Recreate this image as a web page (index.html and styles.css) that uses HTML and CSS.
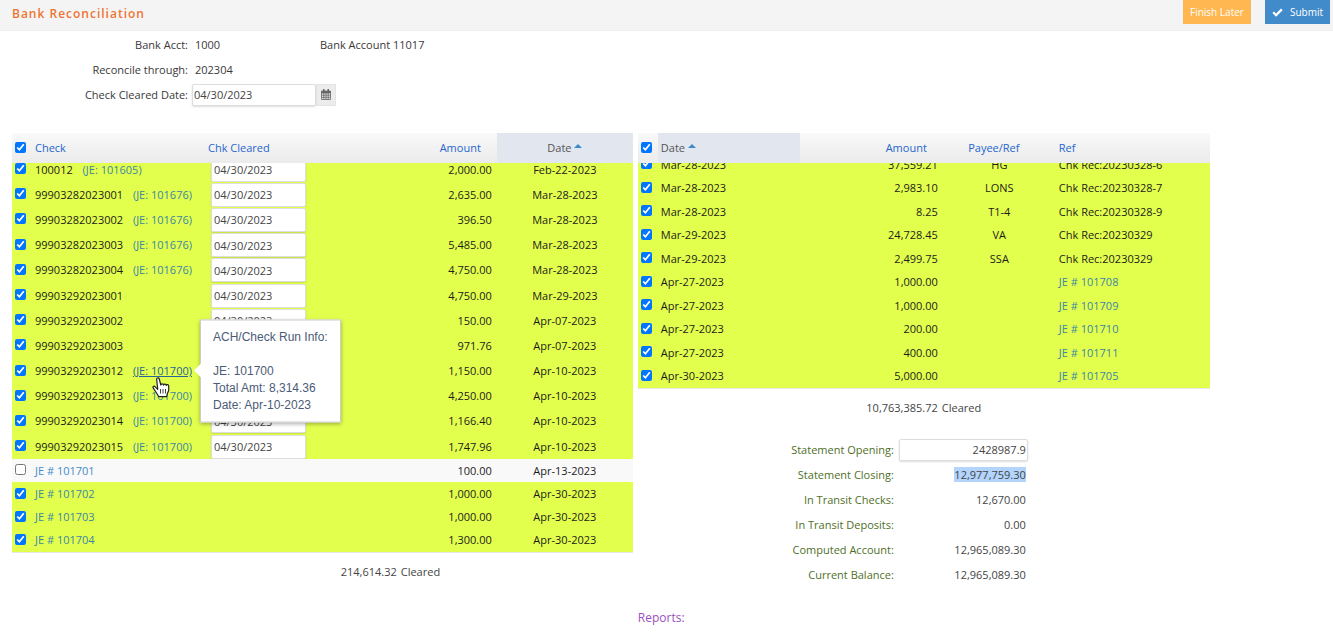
FILE: index.html
```html
<!DOCTYPE html>
<html lang="en">
<head>
<meta charset="utf-8">
<title>Bank Reconciliation</title>
<link rel="stylesheet" href="styles.css">
</head>
<body>
<header class="topbar">
  <h1 class="title">Bank Reconciliation</h1>
  <div class="actions">
    <button class="btn btn-later" type="button">Finish Later</button>
    <button class="btn btn-submit" type="submit"><svg width="11" height="9" viewBox="0 0 11 9" aria-hidden="true"><path d="M1.2 4.3 4.1 7.2 9.8 1.4" fill="none" stroke="#fff" stroke-width="2.3"/></svg>Submit</button>
  </div>
</header>
<form class="filters">
  <span class="label">Bank Acct:</span><span class="value">1000</span><span class="account">Bank Account 11017</span>
  <span class="label">Reconcile through:</span><span class="value wide">202304</span>
  <label class="label" for="cleared-date">Check Cleared Date:</label>
  <div class="date-group wide"><input class="field date-main" id="cleared-date" type="text" value="04/30/2023"><button class="addon" type="button" aria-label="Open calendar"><svg width="10" height="11" viewBox="0 0 10 11" aria-hidden="true"><path d="M.5 2h9v8.500h-9z M.5 4h9 M.5 6.200h9 M.5 8.300h9 M2.800 4v6.500 M5 4v6.500 M7.200 4v6.500" fill="none" stroke="#666" stroke-width=".8"/><path d="M.5 2h9v2h-9z M2 0h1.500v3H2z M6.500 0H8v3H6.500z" fill="#666"/></svg></button></div>
</form>
<main class="panels">
  <section class="panel checks">
    <table class="grid head">
      <colgroup><col class="c-box"><col class="c-check"><col><col class="c-amt"><col class="c-date"></colgroup>
      <thead><tr><th><input type="checkbox" aria-label="Select all checks" checked></th><th>Check</th><th>Chk Cleared</th><th class="num">Amount</th><th class="mid sorted">Date <i class="caret"></i></th></tr></thead>
    </table>
    <div class="scroll checks-scroll">
    <table class="grid body checks-body">
      <colgroup><col class="c-box"><col class="c-check"><col><col class="c-amt"><col class="c-date"></colgroup>
      <tbody>
      <tr class="tall"><td><input type="checkbox" aria-label="100012" checked></td><td>100012 <a class="je" href="#">(JE: 101605)</a></td><td><input class="field cleared" aria-label="Cleared date" value="04/30/2023"></td><td class="num">2,000.00</td><td class="mid">Feb-22-2023</td></tr>
      <tr class="tall"><td><input type="checkbox" aria-label="99903282023001" checked></td><td>99903282023001 <a class="je" href="#">(JE: 101676)</a></td><td><input class="field cleared" aria-label="Cleared date" value="04/30/2023"></td><td class="num">2,635.00</td><td class="mid">Mar-28-2023</td></tr>
      <tr class="tall"><td><input type="checkbox" aria-label="99903282023002" checked></td><td>99903282023002 <a class="je" href="#">(JE: 101676)</a></td><td><input class="field cleared" aria-label="Cleared date" value="04/30/2023"></td><td class="num">396.50</td><td class="mid">Mar-28-2023</td></tr>
      <tr class="tall"><td><input type="checkbox" aria-label="99903282023003" checked></td><td>99903282023003 <a class="je" href="#">(JE: 101676)</a></td><td><input class="field cleared" aria-label="Cleared date" value="04/30/2023"></td><td class="num">5,485.00</td><td class="mid">Mar-28-2023</td></tr>
      <tr class="tall"><td><input type="checkbox" aria-label="99903282023004" checked></td><td>99903282023004 <a class="je" href="#">(JE: 101676)</a></td><td><input class="field cleared" aria-label="Cleared date" value="04/30/2023"></td><td class="num">4,750.00</td><td class="mid">Mar-28-2023</td></tr>
      <tr class="tall"><td><input type="checkbox" aria-label="99903292023001" checked></td><td>99903292023001</td><td><input class="field cleared" aria-label="Cleared date" value="04/30/2023"></td><td class="num">4,750.00</td><td class="mid">Mar-29-2023</td></tr>
      <tr class="tall"><td><input type="checkbox" aria-label="99903292023002" checked></td><td>99903292023002</td><td><input class="field cleared" aria-label="Cleared date" value="04/30/2023"></td><td class="num">150.00</td><td class="mid">Apr-07-2023</td></tr>
      <tr class="tall"><td><input type="checkbox" aria-label="99903292023003" checked></td><td>99903292023003</td><td><input class="field cleared" aria-label="Cleared date" value="04/30/2023"></td><td class="num">971.76</td><td class="mid">Apr-07-2023</td></tr>
      <tr class="tall"><td><input type="checkbox" aria-label="99903292023012" checked></td><td>99903292023012 <span class="tip-anchor"><a class="je hover" href="#">(JE: 101700)</a><span class="tip" role="tooltip">ACH/Check Run Info:<br><br>JE: 101700<br>Total Amt: 8,314.36<br>Date: Apr-10-2023</span><svg class="pointer" width="18" height="21" viewBox="0 0 18 21" aria-hidden="true"><path d="M5.700 12.300 3.200 9.800C2 8.600.3 9.600 1.300 11.200l4.200 6.300 1.200 2.200h8l.5-2.600 1.500-3.600V9c0-1.500-2-1.800-2.400-.6-.2-1.500-2.300-1.700-2.700-.3-.3-1.500-2.400-1.500-2.800-.1L7.300 2C6.800.3 4.300.8 4.700 2.600z" fill="#fff" stroke="#222" stroke-width="1.200" stroke-linejoin="round"/><path d="M8.500 12v4.500M11 12v4.500M13.500 12v4.500" stroke="#444" fill="none"/></svg></span></td><td><input class="field cleared" aria-label="Cleared date" value="04/30/2023"></td><td class="num">1,150.00</td><td class="mid">Apr-10-2023</td></tr>
      <tr class="tall"><td><input type="checkbox" aria-label="99903292023013" checked></td><td>99903292023013 <a class="je" href="#">(JE: 101700)</a></td><td><input class="field cleared" aria-label="Cleared date" value="04/30/2023"></td><td class="num">4,250.00</td><td class="mid">Apr-10-2023</td></tr>
      <tr class="tall"><td><input type="checkbox" aria-label="99903292023014" checked></td><td>99903292023014 <a class="je" href="#">(JE: 101700)</a></td><td><input class="field cleared" aria-label="Cleared date" value="04/30/2023"></td><td class="num">1,166.40</td><td class="mid">Apr-10-2023</td></tr>
      <tr class="tall"><td><input type="checkbox" aria-label="99903292023015" checked></td><td>99903292023015 <a class="je" href="#">(JE: 101700)</a></td><td><input class="field cleared" aria-label="Cleared date" value="04/30/2023"></td><td class="num">1,747.96</td><td class="mid">Apr-10-2023</td></tr>
      <tr class="open"><td><input type="checkbox" aria-label="JE 101701"></td><td><a href="#">JE # 101701</a></td><td></td><td class="num">100.00</td><td class="mid">Apr-13-2023</td></tr>
      <tr><td><input type="checkbox" aria-label="JE 101702" checked></td><td><a href="#">JE # 101702</a></td><td></td><td class="num">1,000.00</td><td class="mid">Apr-30-2023</td></tr>
      <tr><td><input type="checkbox" aria-label="JE 101703" checked></td><td><a href="#">JE # 101703</a></td><td></td><td class="num">1,000.00</td><td class="mid">Apr-30-2023</td></tr>
      <tr><td><input type="checkbox" aria-label="JE 101704" checked></td><td><a href="#">JE # 101704</a></td><td></td><td class="num">1,300.00</td><td class="mid">Apr-30-2023</td></tr>
      </tbody>
    </table>
    </div>
    <p class="total checks-total"><span>214,614.32</span><span>Cleared</span></p>
  </section>
  <section class="panel deposits">
    <table class="grid head">
      <colgroup><col class="d-box"><col class="d-date"><col class="d-amt"><col class="d-payee"><col></colgroup>
      <thead><tr><th><input type="checkbox" aria-label="Select all deposits" checked></th><th class="sorted">Date <i class="caret"></i></th><th class="num">Amount</th><th class="mid payee">Payee/Ref</th><th>Ref</th></tr></thead>
    </table>
    <div class="scroll deposits-scroll">
    <table class="grid body deposits-body">
      <colgroup><col class="d-box"><col class="d-date"><col class="d-amt"><col class="d-payee"><col></colgroup>
      <tbody>
      <tr><td><input type="checkbox" aria-label="20230328-6" checked></td><td>Mar-28-2023</td><td class="num">37,559.21</td><td class="mid">HG</td><td>Chk Rec:20230328-6</td></tr>
      <tr><td><input type="checkbox" aria-label="20230328-7" checked></td><td>Mar-28-2023</td><td class="num">2,983.10</td><td class="mid">LONS</td><td>Chk Rec:20230328-7</td></tr>
      <tr><td><input type="checkbox" aria-label="20230328-9" checked></td><td>Mar-28-2023</td><td class="num">8.25</td><td class="mid">T1-4</td><td>Chk Rec:20230328-9</td></tr>
      <tr><td><input type="checkbox" aria-label="20230329 VA" checked></td><td>Mar-29-2023</td><td class="num">24,728.45</td><td class="mid">VA</td><td>Chk Rec:20230329</td></tr>
      <tr><td><input type="checkbox" aria-label="20230329 SSA" checked></td><td>Mar-29-2023</td><td class="num">2,499.75</td><td class="mid">SSA</td><td>Chk Rec:20230329</td></tr>
      <tr><td><input type="checkbox" aria-label="JE 101708" checked></td><td>Apr-27-2023</td><td class="num">1,000.00</td><td></td><td><a href="#">JE # 101708</a></td></tr>
      <tr><td><input type="checkbox" aria-label="JE 101709" checked></td><td>Apr-27-2023</td><td class="num">1,000.00</td><td></td><td><a href="#">JE # 101709</a></td></tr>
      <tr><td><input type="checkbox" aria-label="JE 101710" checked></td><td>Apr-27-2023</td><td class="num">200.00</td><td></td><td><a href="#">JE # 101710</a></td></tr>
      <tr><td><input type="checkbox" aria-label="JE 101711" checked></td><td>Apr-27-2023</td><td class="num">400.00</td><td></td><td><a href="#">JE # 101711</a></td></tr>
      <tr><td><input type="checkbox" aria-label="JE 101705" checked></td><td>Apr-30-2023</td><td class="num">5,000.00</td><td></td><td><a href="#">JE # 101705</a></td></tr>
      </tbody>
    </table>
    </div>
    <p class="total"><span>10,763,385.72</span><span>Cleared</span></p>
    <div class="summary">
      <label for="opening">Statement Opening:</label><input class="field opening" id="opening" type="text" value="2428987.9">
      <span class="sum-label">Statement Closing:</span><span class="sum"><mark>12,977,759.30</mark></span>
      <span class="sum-label">In Transit Checks:</span><span class="sum">12,670.00</span>
      <span class="sum-label">In Transit Deposits:</span><span class="sum">0.00</span>
      <span class="sum-label">Computed Account:</span><span class="sum">12,965,089.30</span>
      <span class="sum-label">Current Balance:</span><span class="sum">12,965,089.30</span>
    </div>
    <h2 class="reports">Reports:</h2>
  </section>
</main>
</body>
</html>
```

FILE: styles.css
```css
* { box-sizing: border-box; }
body { margin: 0; background: #fff; color: #444; font: 11px/16px "Open Sans", sans-serif; }
button, input { font: inherit; color: inherit; }
a { color: #428bca; text-decoration: none; }

.topbar { display: flex; justify-content: space-between; align-items: flex-start; height: 31px; padding: 0 3px 0 12px; background: #f4f4f4; border-bottom: 1px solid #efefef; }
.title { margin: 0; font-size: 12px; line-height: 28px; font-weight: 600; letter-spacing: 1px; color: #ee7433; }
.actions { display: flex; gap: 14px; }
.btn { display: flex; align-items: center; justify-content: center; gap: 7px; height: 24px; padding: 0 7px; border: 0; font-size: 10px; color: #fff; white-space: nowrap; }
.btn-later { background: #ffb752; }
.btn-submit { background: #428bca; }

.filters { display: grid; grid-template-columns: 188px 124px 1fr; grid-auto-rows: 25px; column-gap: 4px; align-items: center; margin-top: 1px; color: #393939; }
.label { text-align: right; }
.value { padding-left: 3px; }
.wide { grid-column: 2 / 4; }
.date-group { display: flex; }
.field { border: 1px solid #ddd; border-radius: 2px; background: #fff; color: #444; padding: 0 2px; box-shadow: 0 1px 2px #0002; }
.date-main { width: 124px; height: 22px; padding-left: 1px; }
.addon { display: flex; align-items: center; justify-content: center; width: 20px; height: 22px; padding: 0; border: 1px solid #e4e4e4; background: #ececec; }

.panels { display: grid; grid-template-columns: 621fr 572fr; gap: 5px; width: calc(90% - 2px); margin: 26px 0 0 12px; }
.grid { width: 100%; table-layout: fixed; border-collapse: collapse; }
.grid th, .grid td { padding: 0; text-align: left; font-weight: 400; white-space: nowrap; }
.head th { height: 30px; color: #2566cf; }
.head tr { background: linear-gradient(#f9f9f9, #ebebeb); }
.head .sorted { color: #555; background: #e2e6ee; }
.grid .num { text-align: right; padding-right: 5px; }
.grid .mid { text-align: center; }
.head .num { padding-right: 16px; }
.head .payee { padding-right: 11px; }
.caret { display: inline-block; margin-bottom: 4px; border: 4px solid transparent; border-top: 0; border-bottom-color: #3d8acb; }
.c-box { width: 23px; }
.c-check { width: 173px; }
.c-amt { width: 100px; }
.c-date { width: 136px; }
.d-box { width: 20px; }
.d-date { width: 142px; }
.d-amt { width: 143px; }
.d-payee { width: 113px; }
.deposits th:nth-child(2), .deposits td:nth-child(2), .deposits th:last-child, .deposits td:last-child { padding-left: 3px; }

.scroll { display: flex; flex-direction: column; justify-content: flex-end; overflow: hidden; border-bottom: 1px solid #e6e6e6; }
.checks-scroll { height: 390px; }
.deposits-scroll { height: 226px; }
.checks-body { flex: none; height: 395px; }
.deposits-body { flex: none; height: 235px; }
.body tr { height: 23px; background: #e3ff4d; color: #1c1c1c; }
.body .tall { height: 25px; }
.body .open { background: #f9f9f9; }
.body a { color: #3b86a3; }
.body .open a { color: #428bca; }
input[type="checkbox"] { display: block; width: 11px; height: 11px; margin: 0 0 2px 3px; accent-color: #0075ff; }
.cleared { display: block; width: 95px; height: 24px; margin-left: 3px; }
.je { margin-left: 7px; }
.body .hover { color: #2a6496; text-decoration: underline; }

.tip-anchor { position: relative; }
.tip { position: absolute; z-index: 2; left: 100%; top: 50%; transform: translateY(-50%); margin-left: 8px; padding: 8px 12px; background: #fff; border: 1px solid #ccc; box-shadow: 0 1px 4px #0005; color: #4c5b78; font: 12px/17px "Liberation Sans", Arial, sans-serif; }
.tip::before { content: ""; position: absolute; right: 100%; top: 50%; transform: translateY(-50%); border: 7px solid transparent; border-left: 0; border-right-color: #fff; }
.pointer { position: absolute; z-index: 3; left: 26px; top: 14px; }

.total { display: flex; justify-content: center; gap: 4px; margin: 11px 0 0; }
.checks-total { padding-left: 136px; }
.summary { display: grid; grid-template-columns: 256px 129px; grid-auto-rows: 25px; column-gap: 5px; align-items: center; margin-top: 21px; }
.summary label, .sum-label { text-align: right; color: #4f6f28; }
.opening { width: 100%; height: 22px; padding-right: 1px; text-align: right; }
.sum { text-align: right; padding-right: 2px; }
mark { background: #b3d4fc; color: inherit; }
.reports { margin: 22px 0 0; font-size: 12px; line-height: 18px; font-weight: 400; color: #9b4fc0; }
```
